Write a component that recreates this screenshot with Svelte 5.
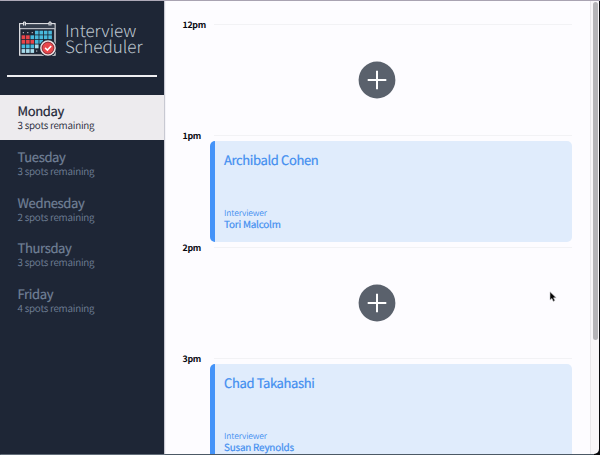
<script>
  const days = [
    { name: 'Monday', spots: 3, selected: true },
    { name: 'Tuesday', spots: 3 },
    { name: 'Wednesday', spots: 2 },
    { name: 'Thursday', spots: 3 },
    { name: 'Friday', spots: 4 }
  ];
  const slots = [
    { time: '12pm' },
    { time: '1pm', student: 'Archibald Cohen', interviewer: 'Tori Malcolm' },
    { time: '2pm' },
    { time: '3pm', student: 'Chad Takahashi', interviewer: 'Susan Reynolds' }
  ];
  // r = red, b = blue, w = pale, d = dot, . = empty
  const grid = ['dddbbbb', 'rrbbbbb', 'rrrbb..', 'bbbwd..', 'wwwd...'];
  const fills = { r: '#e94449', b: '#48b9dc', w: '#a9dcec', d: '#d5dbe2' };
  const cells = grid.flatMap((row, y) =>
    [...row].map((kind, x) => ({ kind, x: 3.6 + x * 4.45, y: 9.7 + y * 4.6 })).filter((c) => c.kind !== '.')
  );
</script>

<div class="window">
  <aside>
    <header>
      <svg class="logo" width="40" height="36" viewBox="0 0 40 36">
        <rect x="1.7" y="2.7" width="35.3" height="31.4" fill="#1d2635" stroke="#e3e4e8" stroke-width="1.3" />
        <path d="M2.3 3.5h34.1v3.6H2.3z" fill="#343d4c" />
        <path d="M2 7.7h34.5" stroke="#d9dbe0" stroke-width="1" />
        <path d="M5.5 4.5V1h2v3.5M31 4.5V1h2v3.5" fill="#78808b" stroke="#e3e4e8" stroke-width="1" />
        {#each cells as c}
          {#if c.kind === 'd'}
            <rect x={c.x + 1.2} y={c.y + 1.4} width="1.1" height="1.1" fill={fills.d} />
          {:else}
            <rect x={c.x} y={c.y} width="3.6" height="3.8" fill={fills[c.kind]} />
          {/if}
        {/each}
        <circle cx="30" cy="27" r="8.7" fill="#1d2635" />
        <circle cx="30" cy="27" r="7.1" fill="#e9474b" stroke="#e6e2e4" stroke-width="1.5" />
        <circle cx="30" cy="27" r="5.8" fill="none" stroke="#7d3540" stroke-width=".8" />
        <path d="M27.1 26.9l2.3 2.2 3.8-4" fill="none" stroke="#fff" stroke-width="1.5" />
      </svg>
      <div class="title"><span>Interview</span><span>Scheduler</span></div>
    </header>
    <hr />
    <nav>
      {#each days as day}
        <div class="day" class:selected={day.selected}>
          <div class="name">{day.name}</div>
          <div class="spots">{day.spots} spots remaining</div>
        </div>
      {/each}
    </nav>
  </aside>
  <main>
    {#each slots as slot}
      <section>
        <div class="hour"><b>{slot.time}</b><i></i></div>
        {#if slot.student}
          <article>
            <h2>{slot.student}</h2>
            <div class="label">Interviewer</div>
            <div class="person">{slot.interviewer}</div>
          </article>
        {:else}
          <div class="empty">
            <svg width="38" height="38" viewBox="0 0 38 38">
              <circle cx="19" cy="19" r="18.4" fill="#5a616c" />
              <path d="M19 9.7v18.6M9.7 19h18.6" stroke="#fff" stroke-width="2" />
            </svg>
          </div>
        {/if}
      </section>
    {/each}
  </main>
  <div class="track"><div class="thumb"></div></div>
  <svg class="cursor" width="9" height="12" viewBox="0 0 9 12">
    <path d="M1 .8v8.3l1.9-1.7 1.4 3 1.6-.8-1.4-2.8h2.7z" fill="#050505" stroke="#c8c7cb" stroke-width=".6" />
  </svg>
</div>

<style>
  :global(body) { margin: 0; background: #08090c; }
  .window {
    position: relative;
    box-sizing: border-box;
    display: flex;
    width: 600px;
    height: 455px;
    overflow: hidden;
    font-family: 'Noto Sans CJK JP', 'Noto Sans', sans-serif;
    text-rendering: geometricPrecision;
    background: linear-gradient(#a9a3b2, #a9a3b2) top / 100% 1px no-repeat, #08090c;
    padding: 1px 1px 1px 0;
  }
  .window::after {
    content: '';
    position: absolute;
    left: 0;
    bottom: 0;
    width: 594px;
    height: 1px;
    background: #4c5965;
  }
  aside {
    flex: none;
    width: 164px;
    background: #1e2636;
    box-shadow: 1px 0 1px #c8c9d2;
    z-index: 1;
  }
  header { display: flex; height: 74px; box-sizing: border-box; padding: 20px 0 0 18px; }
  .logo { flex: none; }
  .title {
    display: flex;
    flex-direction: column;
    margin: .5px 0 0 7px;
    color: #bfc6d0;
    font-size: 17px;
    font-weight: 300;
    line-height: 16.5px;
  }
  hr { width: 150px; height: 1.5px; margin: 0 7px 18px; border: 0; background: #eeeef1; }
  .day { box-sizing: border-box; height: 45.8px; padding: 8.6px 0 0 17.5px; color: #718096; }
  .name { font-size: 13px; line-height: 16px; letter-spacing: -.35px; -webkit-text-stroke: .2px; }
  .spots { font-size: 9.9px; line-height: 12px; font-weight: 350; letter-spacing: -.23px; white-space: nowrap; }
  .selected { padding-top: 8.2px; background: #edebee; color: #1e2636; }
  main {
    flex: 1;
    min-width: 0;
    box-sizing: border-box;
    padding: 17.6px 18px 0;
    background: #fdfcff;
    overflow: hidden;
  }
  section { height: 111.5px; }
  .hour { display: flex; align-items: center; height: 11px; }
  .hour b {
    box-sizing: border-box;
    width: 32px;
    flex: none;
    padding-left: .5px;
    font-size: 8.8px;
    line-height: 11px;
    letter-spacing: -.3px;
    color: #070810;
  }
  .hour i { flex: 1; height: 1px; background: #f2f2f5; }
  article {
    box-sizing: border-box;
    height: 100.5px;
    margin-left: 28px;
    padding: 10px 0 0 9px;
    background: #e0ecfc;
    border-left: 5px solid #4493f8;
    border-radius: 5px;
    color: #428ef0;
  }
  h2 { margin: 0 0 40px; font-size: 13px; font-weight: 400; line-height: 17px; letter-spacing: -.37px; -webkit-text-stroke: .2px; }
  .label { font-size: 8.4px; font-weight: 350; line-height: 11px; letter-spacing: -.1px; }
  .person { font-size: 9.9px; line-height: 12px; margin-top: -1.2px; letter-spacing: -.2px; -webkit-text-stroke: .2px; }
  .empty { display: flex; justify-content: center; padding-top: 31px; margin-left: 28px; width: 334px; }
  .empty svg { display: block; }
  .track {
    flex: none;
    box-sizing: border-box;
    width: 9px;
    padding: 1px 1px 0 2px;
    border-left: 1px solid #e9e7eb;
    background: #f8f6f9;
    border-bottom-right-radius: 5px;
  }
  .thumb { width: 5px; height: 338px; background: #b5b4b8; border-radius: 3px; }
  .cursor { position: absolute; left: 549px; top: 291px; }
</style>
